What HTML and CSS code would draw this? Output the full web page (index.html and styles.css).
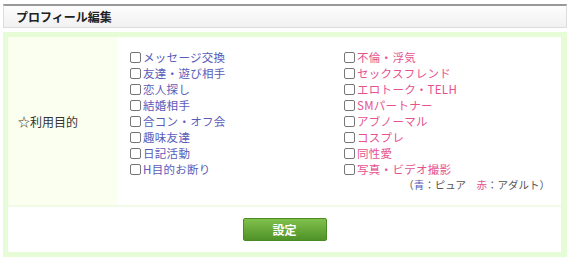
FILE: index.html
```html
<!DOCTYPE html>
<html lang="ja">
<head>
    <meta charset="UTF-8">
    <title>プロフィール編集</title>
    <link rel="stylesheet" href="styles.css">
</head>
<body>
    <div class="page-title">
        <h1>プロフィール編集</h1>
    </div>
    <form class="form-box">
        <div class="form-row">
            <div class="row-label">☆利用目的</div>
            <div class="row-body">
                <div class="choices">
                    <div class="col pure">
                        <label><input type="checkbox">メッセージ交換</label>
                        <label><input type="checkbox">友達・遊び相手</label>
                        <label><input type="checkbox">恋人探し</label>
                        <label><input type="checkbox">結婚相手</label>
                        <label><input type="checkbox">合コン・オフ会</label>
                        <label><input type="checkbox">趣味友達</label>
                        <label><input type="checkbox">日記活動</label>
                        <label><input type="checkbox">H目的お断り</label>
                    </div>
                    <div class="col adult">
                        <label><input type="checkbox">不倫・浮気</label>
                        <label><input type="checkbox">セックスフレンド</label>
                        <label><input type="checkbox">エロトーク・TELH</label>
                        <label><input type="checkbox">SMパートナー</label>
                        <label><input type="checkbox">アブノーマル</label>
                        <label><input type="checkbox">コスプレ</label>
                        <label><input type="checkbox">同性愛</label>
                        <label><input type="checkbox">写真・ビデオ撮影</label>
                    </div>
                </div>
                <p class="legend">（<span class="blue">青</span>：ピュア　<span class="red">赤</span>：アダルト）</p>
            </div>
        </div>
        <div class="form-actions">
            <button type="submit" class="submit-btn">設定</button>
        </div>
    </form>
</body>
</html>
```

FILE: styles.css
```css
body {
    margin: 0;
    padding: 4px 3px 0 3px;
    font-family: "Noto Sans CJK JP", sans-serif;
    font-size: 12px;
    color: #333;
    background-color: #fff;
}
.page-title {
    border: 1px solid #ddd;
    border-top: 2px solid #999;
    background: linear-gradient(#fdfdfd, #f1f1f1);
    height: 21px;
    display: flex;
    align-items: center;
    padding-left: 12px;
}
.page-title h1 {
    margin: 0;
    font-size: 12px;
    font-weight: bold;
    color: #222;
}
.form-box {
    margin-top: 4px;
    border: 5px solid #e5fcd6;
    border-right-width: 6px;
    background-color: #fff;
}
.form-row {
    display: flex;
    border-bottom: 2px solid #f0fce8;
}
.row-label {
    flex-shrink: 0;
    width: 110px;
    background-color: #fbffef;
    display: flex;
    align-items: center;
    padding-left: 10px;
    box-sizing: border-box;
    color: #333;
}
.row-body {
    flex: 1;
    padding: 12px 11px 12px 12px;
}
.choices {
    display: flex;
}
.col {
    display: flex;
    flex-direction: column;
}
.col.pure {
    width: 214px;
}
.col label {
    display: flex;
    align-items: center;
    height: 16px;
    line-height: 16px;
    font-size: 11.5px;
    letter-spacing: 0.3px;
}
.col input {
    appearance: none;
    -webkit-appearance: none;
    width: 11px;
    height: 11px;
    margin: 0 2px 0 0;
    border: 1px solid #777;
    border-radius: 2px;
    background: #fff;
    box-sizing: border-box;
}
.pure label, .blue {
    color: #5b5cb8;
}
.adult label, .red {
    color: #e5528f;
}
.legend {
    margin: 0;
    text-align: right;
    line-height: 16px;
    font-size: 10.5px;
    color: #555;
}
.form-actions {
    height: 45px;
    display: flex;
    align-items: center;
    justify-content: center;
}
.submit-btn {
    width: 84px;
    height: 23px;
    border: 1px solid #4a8a22;
    border-radius: 2px;
    background: linear-gradient(#80c04c, #4f9228);
    color: #fff;
    font-family: "Noto Sans CJK JP", sans-serif;
    font-size: 12px;
    font-weight: bold;
    cursor: pointer;
}
```
